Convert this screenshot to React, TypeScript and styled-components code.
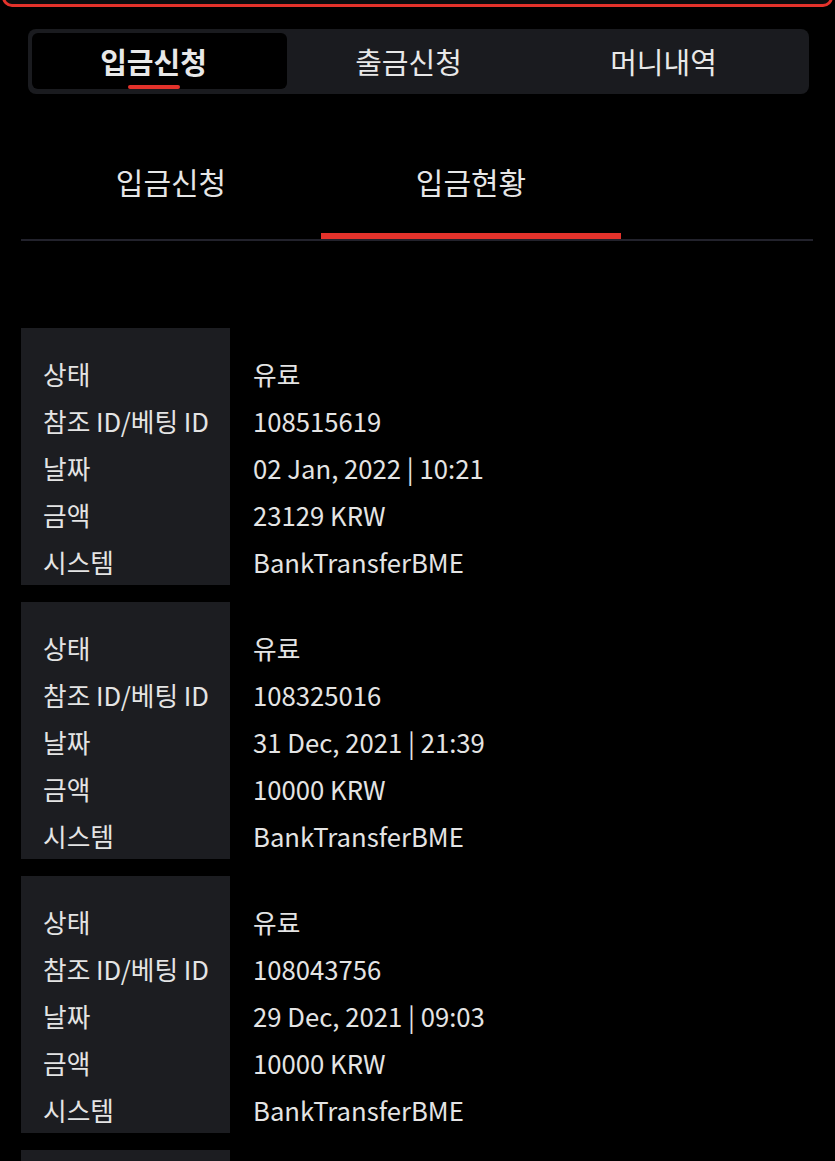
import styled, { createGlobalStyle } from 'styled-components';

const GlobalStyle = createGlobalStyle`
  html, body {
    margin: 0;
    padding: 0;
    background: #000;
  }
  body {
    font-family: 'Noto Sans CJK KR', 'Noto Sans', sans-serif;
    color: #e6e6e6;
    overflow-x: hidden;
  }
`;

const RED = '#e3322b';

const Page = styled.main`
  display: flex;
  flex-direction: column;
  min-height: 100vh;
  background: #000;
`;

const HeaderBox = styled.div`
  height: 40px;
  margin: -39px 2px 0;
  border: 3px solid ${RED};
  border-radius: 10px;
  background: #0c0c0e;
`;

const TabBar = styled.nav`
  display: grid;
  grid-template-columns: repeat(3, 255px);
  margin: 22px 26px 0 28px;
  padding: 4px 4px 5px;
  background: #1a1b1f;
  border-radius: 8px;
`;

const TopTab = styled.button<{ $active?: boolean }>`
  position: relative;
  height: 56px;
  border: 0;
  border-radius: 6px;
  background: ${(p) => (p.$active ? '#000' : 'transparent')};
  color: #e8e8e8;
  font-family: inherit;
  font-size: 29px;
  font-weight: ${(p) => (p.$active ? 700 : 400)};
  line-height: 56px;
  padding: 0 12px 0 0;
  &::after {
    content: '';
    display: ${(p) => (p.$active ? 'block' : 'none')};
    position: absolute;
    left: 50%;
    bottom: 0;
    width: 52px;
    height: 4px;
    margin-left: -32px;
    border-radius: 3px;
    background: ${RED};
  }
`;

const SubTabs = styled.nav`
  display: flex;
  margin: 29px 22px 0 21px;
  border-bottom: 2px solid #22222c;
`;

const SubTab = styled.div<{ $active?: boolean }>`
  width: 300px;
  padding: 40px 0 34px;
  text-align: center;
  font-size: 30px;
  line-height: 36px;
  color: #e6e6e6;
  border-bottom: 6px solid ${(p) => (p.$active ? RED : 'transparent')};
`;

const CardList = styled.section`
  display: flex;
  flex-direction: column;
  gap: 17px;
  margin: 87px 0 0 21px;
`;

const Card = styled.article`
  display: flex;
  height: 257px;
`;

const Column = styled.dl<{ $label?: boolean }>`
  display: flex;
  flex-direction: column;
  margin: 0;
  box-sizing: border-box;
  width: ${(p) => (p.$label ? '209px' : 'auto')};
  padding: 22px 0 0 ${(p) => (p.$label ? '22px' : '23px')};
  background: ${(p) => (p.$label ? '#1c1d21' : 'transparent')};
`;

const Cell = styled.dd`
  margin: 0;
  height: 47px;
  line-height: 47px;
  font-size: 25.7px;
  color: #e4e4e4;
  white-space: nowrap;
`;

type Deposit = {
  status: string;
  id: string;
  date: string;
  amount: string;
  system: string;
};

const LABELS = ['상태', '참조 ID/베팅 ID', '날짜', '금액', '시스템'];

const deposits: Deposit[] = [
  { status: '유료', id: '108515619', date: '02 Jan, 2022 | 10:21', amount: '23129 KRW', system: 'BankTransferBME' },
  { status: '유료', id: '108325016', date: '31 Dec, 2021 | 21:39', amount: '10000 KRW', system: 'BankTransferBME' },
  { status: '유료', id: '108043756', date: '29 Dec, 2021 | 09:03', amount: '10000 KRW', system: 'BankTransferBME' },
  { status: '유료', id: '107902114', date: '27 Dec, 2021 | 18:12', amount: '10000 KRW', system: 'BankTransferBME' },
];

const App = () => {
  return (
    <Page>
      <GlobalStyle />
      <HeaderBox />
      <TabBar>
        <TopTab $active>입금신청</TopTab>
        <TopTab>출금신청</TopTab>
        <TopTab>머니내역</TopTab>
      </TabBar>
      <SubTabs>
        <SubTab>입금신청</SubTab>
        <SubTab $active>입금현황</SubTab>
      </SubTabs>
      <CardList>
        {deposits.map((d) => (
          <Card key={d.id}>
            <Column $label>
              {LABELS.map((l) => (
                <Cell key={l}>{l}</Cell>
              ))}
            </Column>
            <Column>
              <Cell>{d.status}</Cell>
              <Cell>{d.id}</Cell>
              <Cell>{d.date}</Cell>
              <Cell>{d.amount}</Cell>
              <Cell>{d.system}</Cell>
            </Column>
          </Card>
        ))}
      </CardList>
    </Page>
  );
};

export default App;
